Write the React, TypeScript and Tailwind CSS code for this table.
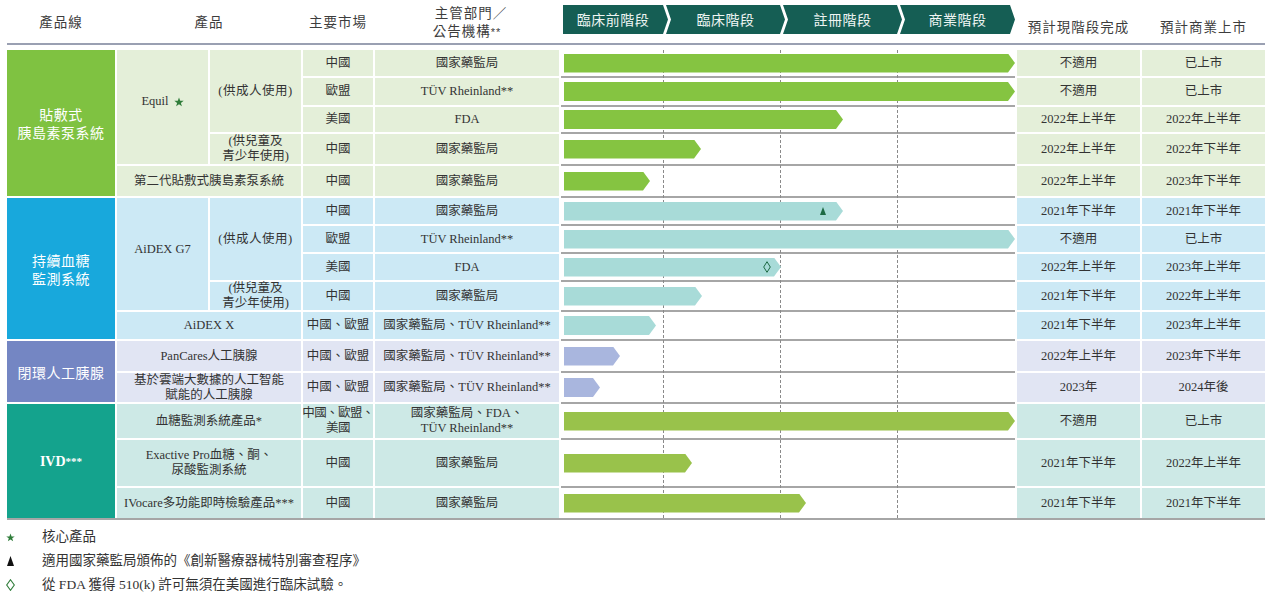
import { Fragment } from 'react'
import type { ReactNode } from 'react'

const SANS = "font-['Noto_Sans_CJK_TC','Noto_Sans',sans-serif]"
const COLS = 'grid-cols-[108px_91px_91px_70px_184px_454px_123px_123px]'
const ROWS = 'grid-rows-[26px_27px_25px_30px_30px_26px_26px_26px_28px_27px_30px_29px_34px_46px_30px]'

const tones = [
  { label: 'bg-[#7fc241]', cell: 'bg-[#e4efd9]', bar: 'bg-[#85c441]' },
  { label: 'bg-[#18a8dc]', cell: 'bg-[#cce9f5]', bar: 'bg-[#a8dbd8]' },
  { label: 'bg-[#7486c3]', cell: 'bg-[#e1e5f3]', bar: 'bg-[#a9b6de]' },
  { label: 'bg-[#14a38d]', cell: 'bg-[#cde9e6]', bar: 'bg-[#99c24b]' },
]

type Row = {
  g: number
  market: ReactNode
  auth: ReactNode
  bar: number
  done: string
  launch: string
  mark?: 'tri' | 'dia'
}

const rows: Row[] = [
  { g: 0, market: '中國', auth: '國家藥監局', bar: 451, done: '不適用', launch: '已上市' },
  { g: 0, market: '歐盟', auth: 'TÜV Rheinland**', bar: 451, done: '不適用', launch: '已上市' },
  { g: 0, market: '美國', auth: 'FDA', bar: 279, done: '2022年上半年', launch: '2022年上半年' },
  { g: 0, market: '中國', auth: '國家藥監局', bar: 137, done: '2022年上半年', launch: '2022年下半年' },
  { g: 0, market: '中國', auth: '國家藥監局', bar: 86, done: '2022年上半年', launch: '2023年下半年' },
  { g: 1, market: '中國', auth: '國家藥監局', bar: 279, done: '2021年下半年', launch: '2021年下半年', mark: 'tri' },
  { g: 1, market: '歐盟', auth: 'TÜV Rheinland**', bar: 451, done: '不適用', launch: '已上市' },
  { g: 1, market: '美國', auth: 'FDA', bar: 217, done: '2022年上半年', launch: '2023年上半年', mark: 'dia' },
  { g: 1, market: '中國', auth: '國家藥監局', bar: 138, done: '2021年下半年', launch: '2022年上半年' },
  { g: 1, market: '中國、歐盟', auth: '國家藥監局、TÜV Rheinland**', bar: 92, done: '2021年下半年', launch: '2023年上半年' },
  { g: 2, market: '中國、歐盟', auth: '國家藥監局、TÜV Rheinland**', bar: 56, done: '2022年上半年', launch: '2023年下半年' },
  { g: 2, market: '中國、歐盟', auth: '國家藥監局、TÜV Rheinland**', bar: 36, done: '2023年', launch: '2024年後' },
  {
    g: 3,
    market: (
      <span className="tracking-[-0.6px]">
        中國、歐盟、
        <br />
        美國
      </span>
    ),
    auth: (
      <>
        國家藥監局、FDA、
        <br />
        TÜV Rheinland**
      </>
    ),
    bar: 451,
    done: '不適用',
    launch: '已上市',
  },
  { g: 3, market: '中國', auth: '國家藥監局', bar: 128, done: '2021年下半年', launch: '2022年上半年' },
  { g: 3, market: '中國', auth: '國家藥監局', bar: 242, done: '2021年下半年', launch: '2021年下半年' },
]

function Cell({ className = '', children }: { className?: string; children?: ReactNode }) {
  return (
    <div className={`flex items-center justify-center text-center leading-[15px] whitespace-nowrap ${className}`}>
      {children}
    </div>
  )
}

function Star({ className = '' }: { className?: string }) {
  return (
    <svg viewBox="0 0 10 10" className={className}>
      <polygon points="5,0.5 6.2,3.8 9.7,3.8 6.9,5.9 7.9,9.3 5,7.3 2.1,9.3 3.1,5.9 0.3,3.8 3.8,3.8" fill="#2f7d3a" />
    </svg>
  )
}

function GroupLabel({ tone, span, children }: { tone: string; span: string; children: ReactNode }) {
  return (
    <div className={`${span} ${tone} ${SANS} flex items-center justify-center text-center text-[14px] leading-[18px] tracking-[0.5px] text-white`}>
      {children}
    </div>
  )
}

const kids = (
  <>
    (供兒童及
    <br />
    青少年使用)
  </>
)

const leads: Record<number, ReactNode> = {
  0: (
    <>
      <GroupLabel tone={tones[0].label} span="row-span-5">
        貼敷式
        <br />
        胰島素泵系統
      </GroupLabel>
      <Cell className={`row-span-4 pb-[11px] ${tones[0].cell}`}>
        Equil
        <Star className="ml-[5px] h-[10px] w-[10px]" />
      </Cell>
      <Cell className={`row-span-3 tracking-[0.5px] ${tones[0].cell}`}>(供成人使用)</Cell>
    </>
  ),
  3: <Cell className={`leading-[13px] ${tones[0].cell}`}>{kids}</Cell>,
  4: <Cell className={`col-span-2 ${tones[0].cell}`}>第二代貼敷式胰島素泵系統</Cell>,
  5: (
    <>
      <GroupLabel tone={tones[1].label} span="row-span-5">
        持續血糖
        <br />
        監測系統
      </GroupLabel>
      <Cell className={`row-span-4 pb-[10px] ${tones[1].cell}`}>AiDEX G7</Cell>
      <Cell className={`row-span-3 tracking-[0.5px] ${tones[1].cell}`}>(供成人使用)</Cell>
    </>
  ),
  8: <Cell className={`leading-[13px] ${tones[1].cell}`}>{kids}</Cell>,
  9: <Cell className={`col-span-2 ${tones[1].cell}`}>AiDEX X</Cell>,
  10: (
    <>
      <GroupLabel tone={tones[2].label} span="row-span-2">
        閉環人工胰腺
      </GroupLabel>
      <Cell className={`col-span-2 ${tones[2].cell}`}>PanCares人工胰腺</Cell>
    </>
  ),
  11: (
    <Cell className={`col-span-2 leading-[14px] ${tones[2].cell}`}>
      基於雲端大數據的人工智能
      <br />
      賦能的人工胰腺
    </Cell>
  ),
  12: (
    <>
      <div
        className={`row-span-3 ${tones[3].label} flex items-center justify-center text-[14px] font-bold text-white`}
      >
        IVD<span className="text-[11px]">***</span>
      </div>
      <Cell className={`col-span-2 ${tones[3].cell}`}>血糖監測系統產品*</Cell>
    </>
  ),
  13: (
    <Cell className={`col-span-2 ${tones[3].cell}`}>
      Exactive Pro血糖、酮、
      <br />
      尿酸監測系統
    </Cell>
  ),
  14: <Cell className={`col-span-2 ${tones[3].cell}`}>IVocare多功能即時檢驗產品***</Cell>,
}

const chipFirst =
  '[clip-path:polygon(0_0,calc(100%_-_5px)_0,100%_50%,calc(100%_-_5px)_100%,0_100%)]'
const chipNext =
  '[clip-path:polygon(0_0,calc(100%_-_5px)_0,100%_50%,calc(100%_-_5px)_100%,0_100%,5px_50%)]'

export default function App() {
  return (
    <div className="min-h-screen w-[1273px] bg-white font-['Liberation_Serif','Noto_Sans_CJK_TC',serif] text-[12.5px] text-[#333]">
      {/* header */}
      <div className={`ml-[7px] grid h-[43px] ${COLS} gap-x-[2px] ${SANS} text-[13.5px] text-[#3d3d3d]`}>
        <div className="flex items-center justify-center tracking-[1px]">產品線</div>
        <div className="col-span-2 flex items-center justify-center tracking-[1px]">產品</div>
        <div className="flex items-center justify-center tracking-[1px]">主要市場</div>
        <div className="flex flex-col items-center justify-center leading-[18px] tracking-[1px]">
          <span className="pl-[8px]">主管部門／</span>
          <span>
            公告機構<span className="font-['Liberation_Sans',sans-serif] text-[11px]">**</span>
          </span>
        </div>
        <div className="flex items-start pt-[5px] text-[14px] tracking-[0.5px] text-[#eef5f3]">
          <div className={`ml-[2px] flex h-[29px] w-[105px] items-center justify-center bg-[#155e54] pr-[5px] ${chipFirst}`}>
            臨床前階段
          </div>
          <div className={`-ml-[2px] flex h-[29px] w-[119px] items-center justify-center bg-[#155e54] ${chipNext}`}>
            臨床階段
          </div>
          <div className={`-ml-[2px] flex h-[29px] w-[119px] items-center justify-center bg-[#155e54] ${chipNext}`}>
            註冊階段
          </div>
          <div className={`-ml-[2px] flex h-[29px] w-[115px] items-center justify-center bg-[#155e54] ${chipNext}`}>
            商業階段
          </div>
        </div>
        <div className="flex items-center justify-center pt-[10px] tracking-[1px]">預計現階段完成</div>
        <div className="flex items-center justify-center pt-[10px] tracking-[1px]">預計商業上市</div>
      </div>
      <div className="ml-[7px] h-[2px] w-[1258px] bg-[#9aa0b2]" />

      {/* table */}
      <div className={`mt-[5px] ml-[7px] grid ${COLS} ${ROWS} gap-[2px]`}>
        <div className="relative col-start-6 row-span-15 row-start-1">
          <div className={`grid h-full ${ROWS} gap-y-[2px] bg-[#a6a6a6]`}>
            {rows.map((r, i) => (
              <div key={i} className="flex items-center bg-white">
                <div
                  className={`relative z-10 ml-[3px] h-[19px] ${tones[r.g].bar} [clip-path:polygon(0_0,calc(100%_-_7px)_0,100%_50%,calc(100%_-_7px)_100%,0_100%)]`}
                  style={{ width: r.bar }}
                >
                  {r.mark === 'tri' && (
                    <svg viewBox="0 0 6 8" className="absolute top-[5px] left-[256px] h-[8px] w-[6px]">
                      <polygon points="3,0 6,8 0,8" fill="#1d6a44" />
                    </svg>
                  )}
                  {r.mark === 'dia' && (
                    <svg viewBox="0 0 8 12" className="absolute top-[3px] left-[199px] h-[12px] w-[8px]">
                      <polygon points="4,0.7 7.3,6 4,11.3 0.7,6" fill="none" stroke="#1d6a44" strokeWidth="1" />
                    </svg>
                  )}
                </div>
              </div>
            ))}
          </div>
          <div className="absolute top-0 bottom-0 left-[102px] border-l border-dashed border-[#8a8a8a]" />
          <div className="absolute top-0 bottom-0 left-[219px] border-l border-dashed border-[#8a8a8a]" />
          <div className="absolute top-0 bottom-0 left-[336px] border-l border-dashed border-[#8a8a8a]" />
        </div>

        {rows.map((r, i) => (
          <Fragment key={i}>
            {leads[i]}
            <Cell className={tones[r.g].cell}>{r.market}</Cell>
            <Cell className={tones[r.g].cell}>{r.auth}</Cell>
            <Cell className={tones[r.g].cell}>{r.done}</Cell>
            <Cell className={tones[r.g].cell}>{r.launch}</Cell>
          </Fragment>
        ))}
      </div>
      <div className="ml-[7px] h-[2px] w-[1258px] bg-[#a6a6a6]" />

      {/* legend */}
      <div className="mt-[5px] text-[13.5px] leading-[24px] text-[#333]">
        <div className="flex items-center">
          <div className="flex w-[42px] pl-[6px]">
            <Star className="h-[9px] w-[9px]" />
          </div>
          核心產品
        </div>
        <div className="flex items-center">
          <div className="flex w-[42px] pl-[7px]">
            <svg viewBox="0 0 7 10" className="h-[10px] w-[7px]">
              <polygon points="3.5,0 7,10 0,10" fill="#111" />
            </svg>
          </div>
          適用國家藥監局頒佈的《創新醫療器械特別審查程序》
        </div>
        <div className="flex items-center">
          <div className="flex w-[42px] pl-[6px]">
            <svg viewBox="0 0 9 12" className="h-[12px] w-[9px]">
              <polygon points="4.5,0.7 8.3,6 4.5,11.3 0.7,6" fill="none" stroke="#2f7d3a" strokeWidth="1.1" />
            </svg>
          </div>
          從 FDA 獲得 510(k) 許可無須在美國進行臨床試驗。
        </div>
      </div>
    </div>
  )
}
